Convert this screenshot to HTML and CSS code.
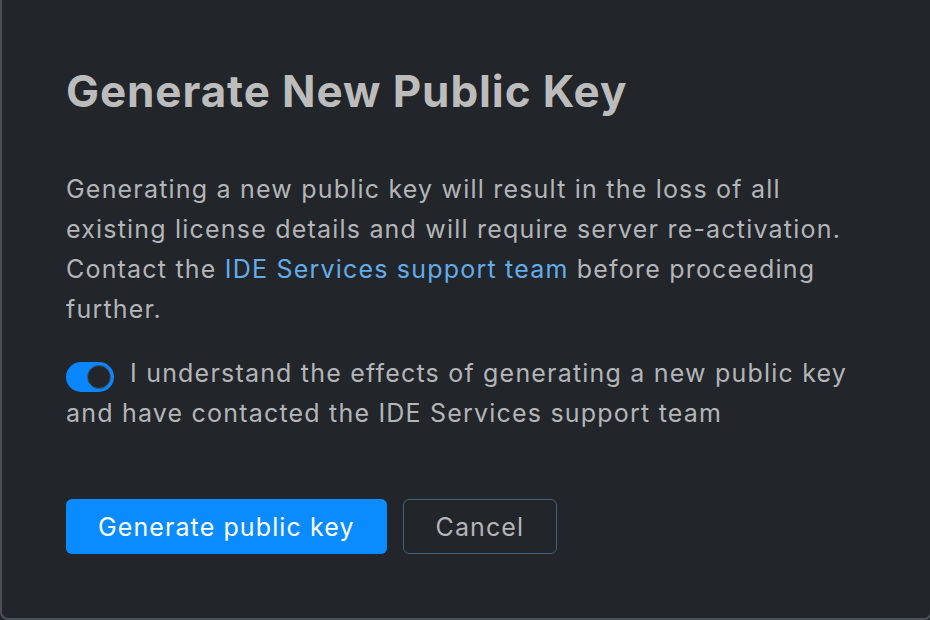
FILE: index.html
```html
<!DOCTYPE html>
<html>
<head>
<meta charset="utf-8">
<link rel="stylesheet" href="styles.css">
</head>
<body>
<div class="dialog">
  <h1 class="title">Generate New Public Key</h1>
  <p class="text">Generating a new public key will result in the loss of all existing license details and will require server re-activation. Contact the <a class="link" href="#">IDE Services support team</a> before proceeding further.</p>
  <label class="check"><span class="toggle"><span class="knob"></span></span>I understand the effects of generating a new public key and have contacted the IDE Services support team</label>
  <div class="actions">
    <button class="btn btn-primary">Generate public key</button>
    <button class="btn btn-secondary">Cancel</button>
  </div>
</div>
</body>
</html>
```
FILE: styles.css
```css
html, body {
  margin: 0;
  padding: 0;
  background: #23262b;
  overflow: hidden;
}
body {
  width: 930px;
  height: 620px;
  font-family: Inter, "Noto Sans", sans-serif;
}
.dialog {
  box-sizing: border-box;
  width: 932px;
  height: 640px;
  margin-top: -20px;
  background: #22252a;
  border: 2px solid #4a5058;
  border-radius: 8px;
  padding: 83px 70px 0 64px;
}
.title {
  margin: 0;
  font-size: 44px;
  line-height: 52px;
  font-weight: 700;
  color: #bcbcbc;
  letter-spacing: 0.9px;
}
.text {
  margin: 52px 0 0;
  font-size: 25px;
  line-height: 40px;
  color: #b3b5b8;
  letter-spacing: 1.2px;
  max-width: 790px;
}
.link {
  color: #62ade9;
  text-decoration: none;
}
.check {
  display: block;
  margin-top: 24px;
  font-size: 25px;
  line-height: 40px;
  letter-spacing: 1.2px;
  color: #b3b5b8;
  max-width: 790px;
}
.toggle {
  display: inline-flex;
  box-sizing: border-box;
  width: 48px;
  height: 30px;
  margin-right: 16px;
  vertical-align: -7px;
  border-radius: 15px;
  background: #0a86ff;
  align-items: center;
  justify-content: flex-end;
  padding-right: 3px;
}
.knob {
  box-sizing: border-box;
  width: 24px;
  height: 24px;
  border-radius: 50%;
  background: #22252a;
  border: 1px solid #3a5a78;
}
.actions {
  display: flex;
  gap: 16px;
  margin-top: 66px;
}
.btn {
  font-family: Inter, "Noto Sans", sans-serif;
  font-size: 25px;
  letter-spacing: 1.1px;
  height: 55px;
  border-radius: 6px;
  padding: 0 32px;
  cursor: pointer;
}
.btn-primary {
  background: #0a8bff;
  color: #ffffff;
  border: none;
}
.btn-secondary {
  background: transparent;
  color: #b3b5b8;
  border: 1.5px solid #47627c;
}
```
